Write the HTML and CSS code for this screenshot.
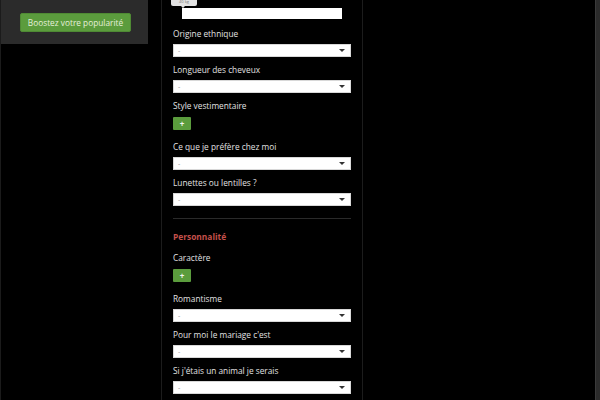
FILE: index.html
```html
<!DOCTYPE html>
<html lang="fr">

<head>
  <meta charset="UTF-8">
  <meta name="viewport" content="width=device-width, initial-scale=1.0">
  <title>Mon profil</title>
  <link rel="stylesheet" href="styles.css">
</head>

<body>
  <div class="page">
    <div class="sidebar">
      <div class="boost">
        <button class="btn-boost">Boostez votre popularité</button>
      </div>
    </div>

    <div class="profile">
      <div class="weight-row">
        <span class="tip">40 kg</span>
        <input type="text" class="weight">
      </div>

      <div class="field">
        <label>Origine ethnique</label>
        <div class="select"><span>-</span><i class="caret"></i></div>
      </div>
      <div class="field">
        <label>Longueur des cheveux</label>
        <div class="select"><span>-</span><i class="caret"></i></div>
      </div>
      <div class="field field-list">
        <label>Style vestimentaire</label>
        <button class="btn-add">+</button>
      </div>
      <div class="field">
        <label>Ce que je préfère chez moi</label>
        <div class="select"><span>-</span><i class="caret"></i></div>
      </div>
      <div class="field">
        <label>Lunettes ou lentilles ?</label>
        <div class="select"><span>-</span><i class="caret"></i></div>
      </div>

      <hr class="sep">

      <h3 class="section-title">Personnalité</h3>

      <div class="field field-list">
        <label>Caractère</label>
        <button class="btn-add">+</button>
      </div>
      <div class="field">
        <label>Romantisme</label>
        <div class="select"><span>-</span><i class="caret"></i></div>
      </div>
      <div class="field">
        <label>Pour moi le mariage c'est</label>
        <div class="select"><span>-</span><i class="caret"></i></div>
      </div>
      <div class="field">
        <label>Si j'étais un animal je serais</label>
        <div class="select"><span>-</span><i class="caret"></i></div>
      </div>
    </div>

    <div class="spacer"></div>
    <div class="scrollbar"></div>
  </div>
</body>

</html>
```

FILE: styles.css
```css
* {
  box-sizing: border-box;
  font-family: "Open Sans", Arial, sans-serif;
}

body {
  margin: 0;
  background: #000;
  overflow: hidden;
}

.page {
  display: flex;
  height: 400px;
  border-left: 1px solid #1b1b1b;
}

.sidebar {
  width: 147px;
  flex-shrink: 0;
}

.boost {
  background: #2b2b2b;
  height: 44px;
  padding: 13px 0 0 19px;
}

.btn-boost {
  display: block;
  width: 111px;
  height: 19px;
  padding: 0;
  border: 1px solid #4f8a34;
  border-radius: 2px;
  background: #5b9c3d;
  color: #e6f0dc;
  font-size: 8.3px;
  cursor: pointer;
}

.profile {
  width: 202px;
  flex-shrink: 0;
  margin-left: 13px;
  border-left: 1px solid #1c1c1c;
  border-right: 1px solid #1c1c1c;
  padding: 8px 11px 0 11px;
  position: relative;
}

.weight-row {
  position: relative;
  padding-left: 9px;
  margin-bottom: 9px;
}

.weight {
  display: block;
  width: 160px;
  height: 11px;
  border: none;
  background: #fff;
  padding: 0;
}

/* little hint bubble above the weight input */
.tip {
  position: absolute;
  left: -2px;
  top: -14px;
  width: 26px;
  height: 12px;
  background: #e2e2e2;
  border-radius: 2px;
  color: #777;
  font-size: 4px;
  line-height: 12px;
  padding-top: 2px;
  text-align: center;
}

.tip::after {
  content: "";
  position: absolute;
  left: 10px;
  bottom: -2px;
  border-left: 2px solid transparent;
  border-right: 2px solid transparent;
  border-top: 2px solid #e2e2e2;
}

.field {
  margin-bottom: 7px;
}

.field label {
  display: block;
  color: #e2e2e2;
  font-size: 8.3px;
  line-height: 12px;
  margin-bottom: 4px;
}

.field-list {
  margin-bottom: 11px;
}

.field-list label {
  margin-bottom: 5px;
}

.select {
  display: flex;
  align-items: center;
  justify-content: space-between;
  height: 13px;
  background: #fff;
  border: 1px solid #d8d8d8;
  padding: 0 5px 0 4px;
  color: #999;
  font-size: 7px;
}

.caret {
  width: 0;
  height: 0;
  border-left: 3.5px solid transparent;
  border-right: 3.5px solid transparent;
  border-top: 3.5px solid #333;
}

.btn-add {
  display: block;
  width: 18px;
  height: 13px;
  padding: 0;
  border: none;
  border-radius: 1px;
  background: #5b9c3d;
  color: #f4f4f4;
  font-size: 8px;
  font-weight: bold;
  line-height: 13px;
}

.sep {
  border: none;
  border-top: 1px solid #2a2a2a;
  margin: 12px 0 12px 0;
}

.section-title {
  margin: 0 0 9px 0;
  color: #c4504b;
  font-size: 8.4px;
  font-weight: bold;
  line-height: 12px;
}

.spacer {
  flex: 1;
}

.scrollbar {
  width: 5px;
  background: #2b2b2b;
  border-left: 1px solid #3a3a3a;
}
```
